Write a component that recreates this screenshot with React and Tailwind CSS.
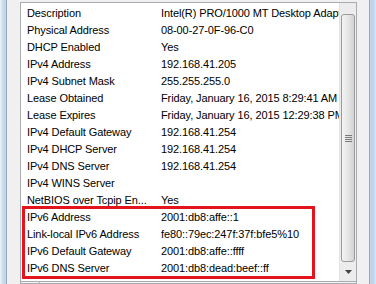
const rows = [
  ['Description', 'Intel(R) PRO/1000 MT Desktop Adapter'],
  ['Physical Address', '08-00-27-0F-96-C0'],
  ['DHCP Enabled', 'Yes'],
  ['IPv4 Address', '192.168.41.205'],
  ['IPv4 Subnet Mask', '255.255.255.0'],
  ['Lease Obtained', 'Friday, January 16, 2015 8:29:41 AM'],
  ['Lease Expires', 'Friday, January 16, 2015 12:29:38 PM'],
  ['IPv4 Default Gateway', '192.168.41.254'],
  ['IPv4 DHCP Server', '192.168.41.254'],
  ['IPv4 DNS Server', '192.168.41.254'],
  ['IPv4 WINS Server', ''],
  ['NetBIOS over Tcpip En...', 'Yes'],
  ['IPv6 Address', '2001:db8:affe::1'],
  ['Link-local IPv6 Address', 'fe80::79ec:247f:37f:bfe5%10'],
  ['IPv6 Default Gateway', '2001:db8:affe::ffff'],
  ['IPv6 DNS Server', '2001:db8:dead:beef::ff'],
];

export default function App() {
  return (
    <div
      className="w-[376px] h-[284px] flex bg-[#f0f0f0] overflow-hidden text-black"
      style={{ fontFamily: '"Liberation Sans", Arial, sans-serif' }}
    >
      {/* left window frame */}
      <div className="w-[7px] h-full bg-gradient-to-r from-[#eef4fa] via-[#c9dbee] to-[#c3d6ea] border-r border-[#9aa9ba]" />
      <div className="w-[13px] h-full bg-[#f0f0f0]" />

      {/* list view */}
      <div className="relative w-[337px] h-[282px] mt-[2px] -mb-[2px] border border-[#a8abb2] bg-white flex flex-col">
        <div className="flex flex-1 min-h-0">
          <div className="w-[318px] pt-[2px] overflow-hidden text-[11px] leading-[17px] tracking-[-0.1px]">
            {rows.map(([label, value]) => (
              <div key={label} className="flex h-[17px] whitespace-nowrap">
                <div className="w-[140px] pl-[6px] shrink-0">{label}</div>
                <div className="shrink-0">{value}</div>
              </div>
            ))}
          </div>

          {/* vertical scrollbar */}
          <div className="w-[17px] border-l border-[#e3e3e3] bg-[#ececec] flex flex-col items-center">
            <div className="h-[11px]" />
            <div className="w-[14px] h-[248px] rounded-[3px] border border-[#9b9b9b] bg-gradient-to-r from-[#f3f3f3] via-[#e6e6e6] to-[#d2d2d2] flex items-center justify-center">
              <div className="flex flex-col gap-[1px]">
                <div className="w-[7px] h-[1px] bg-[#7a7a7a]" />
                <div className="w-[7px] h-[1px] bg-[#7a7a7a]" />
                <div className="w-[7px] h-[1px] bg-[#7a7a7a]" />
                <div className="w-[7px] h-[1px] bg-[#7a7a7a]" />
              </div>
            </div>
            <div className="flex-1 flex items-center justify-center">
              <svg width="7" height="4" viewBox="0 0 7 4">
                <path d="M0 0h7L3.5 4z" fill="#444" />
              </svg>
            </div>
          </div>
        </div>

        {/* horizontal scrollbar edge */}
        <div className="h-[2px] border-t border-[#a8abb2] flex bg-[#f4f4f4]">
          <div className="w-[19px] border-r border-[#b8b8b8]" />
        </div>

        {/* highlight box */}
        <div className="absolute left-[1px] top-[203px] w-[293px] h-[73px] border-[3px] border-[#e3141c]" />
      </div>

      <div className="w-[12px] h-full bg-[#f0f0f0]" />
      {/* right window frame */}
      <div className="w-[7px] h-full border-l border-[#9aa9ba] bg-gradient-to-r from-[#c3d6ea] via-[#bcd3ec] to-[#d9e6f3]" />
    </div>
  );
}
